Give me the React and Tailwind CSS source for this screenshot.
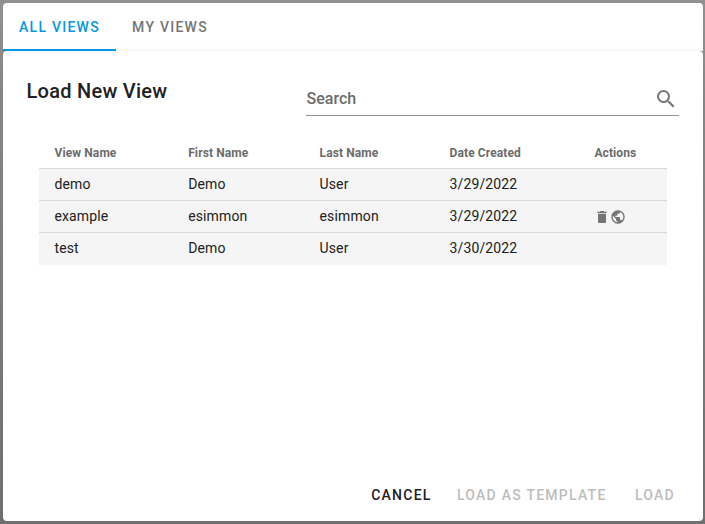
import React from "react";
import { MdSearch, MdDelete, MdPublic } from "react-icons/md";

const rows = [
  { name: "demo", first: "Demo", last: "User", date: "3/29/2022" },
  { name: "example", first: "esimmon", last: "esimmon", date: "3/29/2022", actions: true },
  { name: "test", first: "Demo", last: "User", date: "3/30/2022" },
];

const GRID = "grid grid-cols-[133.7px_131.4px_130px_144.8px_1fr] items-center pl-[15.5px]";

export default function App() {
  return (
    <div className="h-[524px] w-[705px] bg-linear-to-b from-[#919191] via-[#858585] via-20% to-[#6f6f6f] pt-[3px] pr-[2px] pb-[3px] pl-[3px] font-[Roboto,sans-serif] text-[#212121]">
      <div className="flex h-full flex-col">
        <div className="flex h-12 shrink-0 rounded-t bg-linear-to-b from-white from-90% to-[#f7f7f7] text-sm font-medium tracking-[1.25px]">
          <div className="flex w-[113px] items-center justify-center rounded-tl border-b-2 border-[#0398e2] pt-0.5 text-[#0398e2]">ALL VIEWS</div>
          <div className="flex w-[108px] items-center justify-center text-[#757575]">MY VIEWS</div>
        </div>
        <div className="flex flex-1 flex-col rounded bg-white">
          <div className="flex h-[65px] justify-between px-6">
            <h1 className="-ml-[0.5px] pt-6 text-xl leading-8 font-medium tracking-[0.27px]">Load New View</h1>
            <div className="flex w-[373px] items-center justify-between border-b border-[#949494] pt-[31px] text-[#6b6b6b]">
              <span className="pl-[0.5px] text-base font-medium tracking-[0.02px]">Search</span>
              <MdSearch className="mr-px size-6 text-[#757575]" />
            </div>
          </div>
          <div className="mx-9 mt-5">
            <div className={GRID + " h-8 pt-0.5 text-xs font-bold tracking-[0.1px] text-[#6b6b6b]"}>
              <span>View Name</span>
              <span>First Name</span>
              <span>Last Name</span>
              <span>Date Created</span>
              <span>Actions</span>
            </div>
            <div className="bg-[#f5f5f5] pb-px">
              {rows.map((row) => (
                <div key={row.name} className={GRID + " h-8 border-t border-[#d9d9d9] pb-0.5 text-sm tracking-[0.12px]"}>
                  <span>{row.name}</span>
                  <span>{row.first}</span>
                  <span>{row.last}</span>
                  <span>{row.date}</span>
                  {row.actions && (
                    <span className="-ml-[0.4px] flex pt-0.5 text-[#757575]">
                      <MdDelete className="size-4" />
                      <MdPublic className="size-4" />
                    </span>
                  )}
                </div>
              ))}
            </div>
          </div>
          <div className="mt-auto flex h-[52px] items-center justify-end pr-7 text-sm font-medium tracking-[1.25px] text-[#bdbdbd]">
            <button className="mr-[25.3px] text-[#212121]">CANCEL</button>
            <button className="mr-[28.4px]">LOAD AS TEMPLATE</button>
            <button>LOAD</button>
          </div>
        </div>
      </div>
    </div>
  );
}
